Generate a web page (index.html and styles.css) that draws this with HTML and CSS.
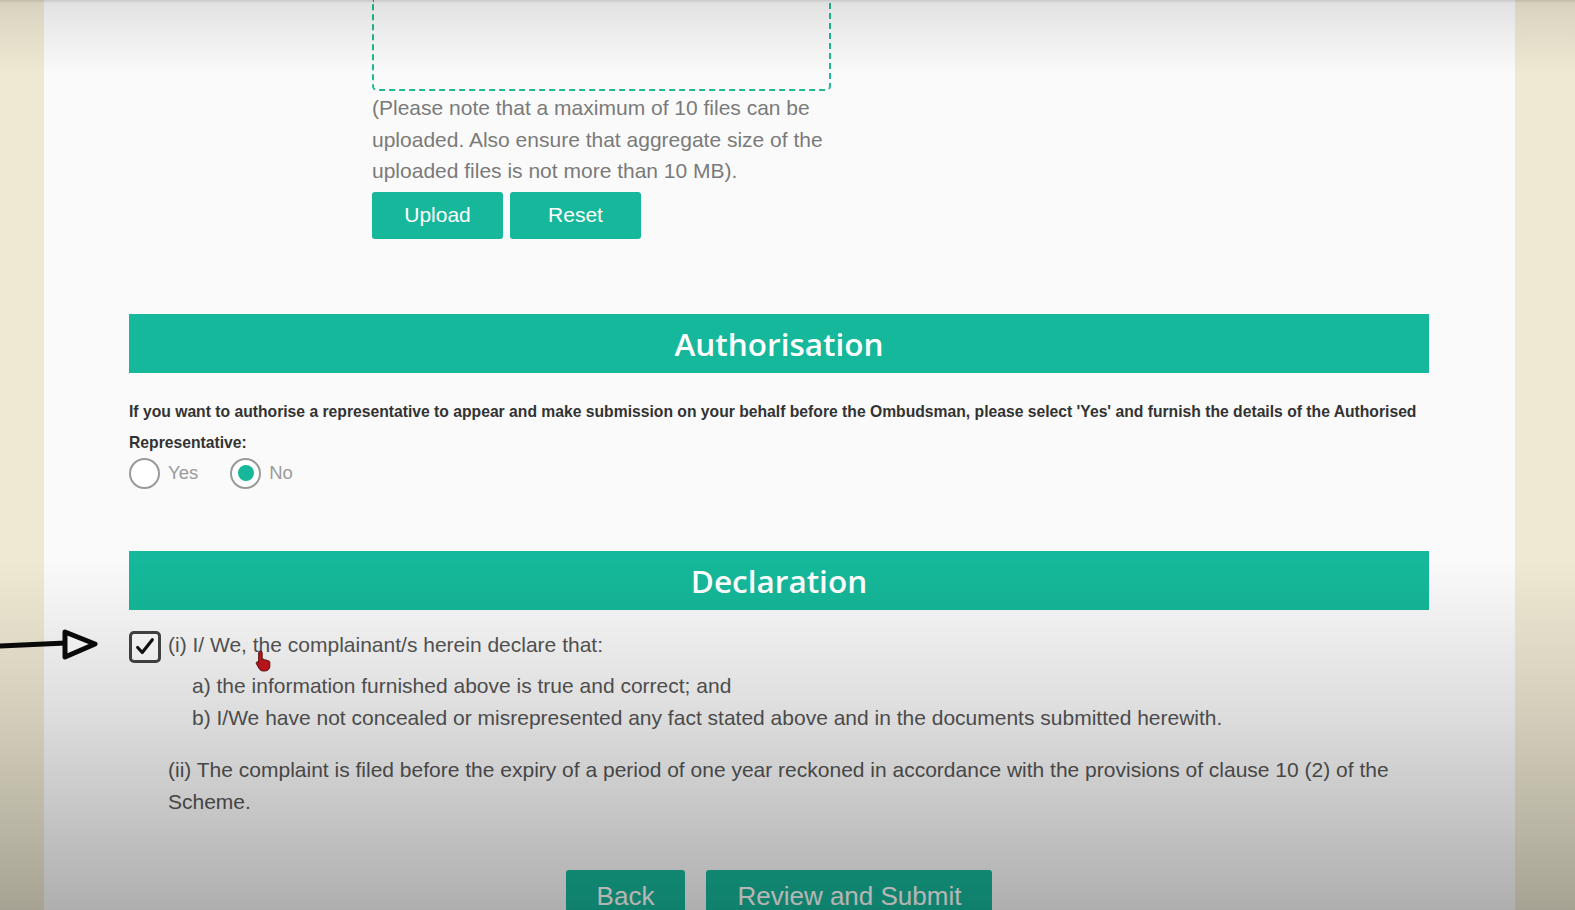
FILE: index.html
```html
<!DOCTYPE html>
<html lang="en">
<head>
    <meta charset="UTF-8" />
    <meta name="viewport" content="width=device-width, initial-scale=1" />
    <title>Complaint - Authorisation and Declaration</title>
    <link rel="stylesheet" href="styles.css">
</head>
<body>
    <div class="screen">
        <main class="sheet">
            <section class="upload">
                <div class="dropzone"></div>
                <p class="upload-note">(Please note that a maximum of 10 files can be uploaded. Also ensure that aggregate size of the uploaded files is not more than 10 MB).</p>
                <div class="upload-actions">
                    <button class="btn btn-small" type="button">Upload</button>
                    <button class="btn btn-small" type="button">Reset</button>
                </div>
            </section>

            <section class="block block-auth">
                <h2 class="band">Authorisation</h2>
                <p class="auth-text">If you want to authorise a representative to appear and make submission on your behalf before the Ombudsman, please select 'Yes' and furnish the details of the Authorised Representative:</p>
                <div class="radios">
                    <label class="radio"><span class="dot"></span>Yes</label>
                    <label class="radio"><span class="dot checked"></span>No</label>
                </div>
            </section>

            <section class="block block-decl">
                <h2 class="band">Declaration</h2>
                <div class="declare">
                    <span class="check">
                        <svg viewBox="0 0 24 24" width="22" height="22"><path d="M4 12.5l5 5.5L20 4" fill="none" stroke="#111" stroke-width="3.4" stroke-linecap="round" stroke-linejoin="round"/></svg>
                    </span>
                    <div class="declare-body">
                        <p class="line">(i) I/ We, the complainant/s herein declare that:</p>
                        <ul class="points">
                            <li>a) the information furnished above is true and correct; and</li>
                            <li>b) I/We have not concealed or misrepresented any fact stated above and in the documents submitted herewith.</li>
                        </ul>
                        <p class="line clause">(ii) The complaint is filed before the expiry of a period of one year reckoned in accordance with the provisions of clause 10 (2) of the Scheme.</p>
                    </div>
                </div>
            </section>

            <div class="form-actions">
                <button class="btn btn-big" type="button">Back</button>
                <button class="btn btn-big" type="button">Review and Submit</button>
            </div>
        </main>
    </div>

    <!-- hand drawn marker pointing at the checkbox -->
    <svg class="marker" viewBox="0 0 100 40" width="100" height="40">
        <path d="M0 21 L66 18" stroke="#0a0a0a" stroke-width="5" stroke-linecap="round" fill="none"/>
        <path d="M65 7 L95 19 L65 32 Z" stroke="#0a0a0a" stroke-width="5" stroke-linejoin="round" fill="#fff"/>
    </svg>

    <!-- mouse pointer -->
    <svg class="pointer" viewBox="0 0 20 26" width="18" height="24">
        <path d="M6 2c1.2 0 2 .8 2 2v7l1-.2c1 0 1.5.5 1.7 1l1.2-.1c.9 0 1.4.5 1.6 1l1-.1c1.2 0 2 .9 2 2v4c0 3-2 5.5-5.5 5.5H9c-2 0-3.3-1-4.3-2.5L1.5 16c-.6-1 .1-2.2 1.3-2.2.6 0 1.2.3 1.6.9L4 15V4c0-1.2.8-2 2-2z" fill="#c4161c" stroke="#5a0a0a" stroke-width="1"/>
    </svg>

    <div class="vignette"></div>
</body>
</html>
```

FILE: styles.css
```css
html, body {
    margin: 0;
    height: 100%;
}
body {
    font-family: 'Liberation Sans', Arial, sans-serif;
    background: #efe9d3;
    color: #555;
    overflow: hidden;
    position: relative;
}
.screen {
    height: 910px;
    padding: 0 60px 0 44px;
}
.sheet {
    background: #fafafa;
    height: 100%;
    padding: 0 86px 0 85px;
    box-sizing: border-box;
    display: flow-root;
}
.upload {
    padding-left: 243px;
}
.dropzone {
    width: 459px;
    height: 91px;
    border: 2px dashed #22b894;
    border-top: none;
    border-radius: 0 0 5px 5px;
    box-sizing: border-box;
}
.upload-note {
    width: 470px;
    margin: 0;
    padding-top: 1px;
    font-size: 21px;
    line-height: 31.5px;
    color: #7a7a7a;
}
.upload-actions {
    display: flex;
    gap: 7px;
    margin-top: 5px;
}
.btn {
    font-family: 'Liberation Sans', Arial, sans-serif;
    background: #16b79a;
    color: #fff;
    border: none;
    border-radius: 3px;
    cursor: pointer;
}
.btn-small {
    width: 131px;
    height: 47px;
    font-size: 21px;
}
.block-auth {
    margin-top: 75px;
}
.block-decl {
    margin-top: 62px;
}
.band {
    margin: 0;
    height: 59px;
    line-height: 59px;
    background: #15b89a;
    color: #fff;
    text-align: center;
    font-family: 'Open Sans', sans-serif;
    font-weight: 600;
    font-size: 31.5px;
}
.auth-text {
    margin: 23px 0 0;
    font-size: 15.7px;
    font-weight: 700;
    line-height: 31px;
    color: #333;
}
.radios {
    display: flex;
    gap: 32px;
    margin-top: 0;
}
.radio {
    display: flex;
    align-items: center;
    gap: 8px;
    font-size: 18.5px;
    color: #9a9a9a;
}
.dot {
    width: 31px;
    height: 31px;
    border: 2px solid #999;
    border-radius: 50%;
    box-sizing: border-box;
    background: #fff;
    display: flex;
    align-items: center;
    justify-content: center;
}
.dot.checked::after {
    content: "";
    width: 16px;
    height: 16px;
    border-radius: 50%;
    background: #16b79a;
}
.declare {
    display: flex;
    gap: 7px;
    margin-top: 19px;
}
.check {
    flex: none;
    width: 32px;
    height: 32px;
    border: 3px solid #444;
    border-radius: 5px;
    box-sizing: border-box;
    background: #fff;
    display: flex;
    align-items: center;
    justify-content: center;
    margin-top: 2px;
}
.declare-body {
    font-size: 21px;
    line-height: 31.5px;
    color: #555;
}
.line {
    margin: 0;
}
.points {
    list-style: none;
    margin: 10px 0 0;
    padding-left: 24px;
}
.clause {
    margin-top: 21px;
}
.form-actions {
    display: flex;
    justify-content: center;
    gap: 21px;
    margin-top: 53px;
}
.btn-big {
    height: 52px;
    padding: 0 31px;
    font-size: 26px;
}
.marker {
    position: absolute;
    left: 0;
    top: 625px;
}
.pointer {
    position: absolute;
    left: 255px;
    top: 649px;
}
.vignette {
    position: absolute;
    inset: 0;
    pointer-events: none;
    background:
        linear-gradient(to bottom, rgba(0, 0, 0, 0.2) 0, rgba(0, 0, 0, 0.1) 3px, rgba(0, 0, 0, 0.07) 20px, rgba(0, 0, 0, 0) 75px),
        linear-gradient(to bottom, rgba(0, 0, 0, 0) 560px, rgba(0, 0, 0, 0.12) 720px, rgba(0, 0, 0, 0.3) 910px);
}
```
